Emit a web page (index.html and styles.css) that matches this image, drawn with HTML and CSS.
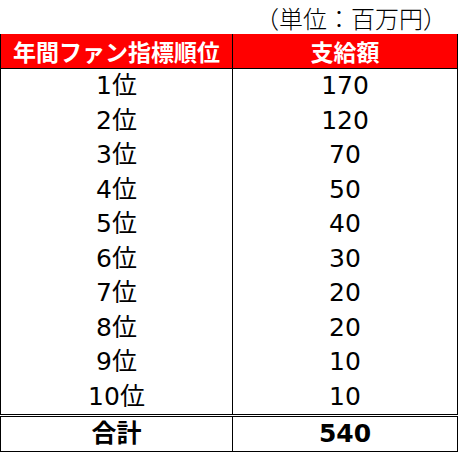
FILE: index.html
```html
<!DOCTYPE html>
<html lang="ja">
<head>
<meta charset="utf-8">
<link rel="stylesheet" href="styles.css">
</head>
<body>
<div class="unit">（単位：百万円）</div>
<table class="tbl">
  <thead>
    <tr><th class="c1">年間ファン指標順位</th><th class="c2">支給額</th></tr>
  </thead>
  <tbody>
    <tr><td class="c1">1位</td><td class="c2">170</td></tr>
    <tr><td class="c1">2位</td><td class="c2">120</td></tr>
    <tr><td class="c1">3位</td><td class="c2">70</td></tr>
    <tr><td class="c1">4位</td><td class="c2">50</td></tr>
    <tr><td class="c1">5位</td><td class="c2">40</td></tr>
    <tr><td class="c1">6位</td><td class="c2">30</td></tr>
    <tr><td class="c1">7位</td><td class="c2">20</td></tr>
    <tr><td class="c1">8位</td><td class="c2">20</td></tr>
    <tr><td class="c1">9位</td><td class="c2">10</td></tr>
    <tr class="last"><td class="c1">10位</td><td class="c2">10</td></tr>
  </tbody>
  <tfoot>
    <tr class="total"><td class="c1">合計</td><td class="c2">540</td></tr>
  </tfoot>
</table>
</body>
</html>
```

FILE: styles.css
```css
html, body {
  margin: 0;
  padding: 0;
  background: #ffffff;
}
body {
  font-family: "DejaVu Sans", "Noto Sans CJK JP", sans-serif;
  color: #000000;
  width: 460px;
}
.unit {
  box-sizing: border-box;
  height: 34px;
  padding-top: 2px;
  padding-right: 13px;
  line-height: 32px;
  font-size: 24px;
  text-align: right;
  font-family: "Noto Sans CJK JP", sans-serif;
  font-weight: 300;
}
.tbl {
  border-collapse: collapse;
  width: 458px;
  table-layout: fixed;
  border-left: 1px solid #000;
  border-right: 1px solid #000;
  border-bottom: 1px solid #000;
}
.tbl th, .tbl td {
  padding: 0;
  text-align: center;
  vertical-align: middle;
}
.tbl .c1 {
  width: 231px;
  border-right: 1px solid #000;
}
.tbl th {
  background: #ff0000;
  color: #ffffff;
  font-weight: bold;
  font-size: 23px;
  height: 34px;
  border-bottom: 1px solid #000;
  font-family: "Noto Sans CJK JP", sans-serif;
}
.tbl tbody td {
  height: 34.5px;
  font-size: 25px;
  line-height: 30px;
}
.tbl tr.last td {
  border-bottom: 3px double #000;
}
.tbl .total td {
  height: 34px;
  font-size: 25px;
  font-weight: bold;
  line-height: 30px;
}
```
